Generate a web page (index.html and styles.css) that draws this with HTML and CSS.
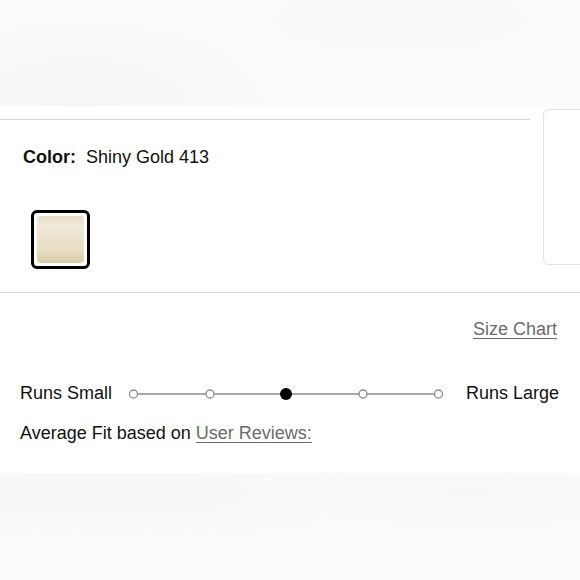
FILE: index.html
```html
<!DOCTYPE html>
<html>
<head>
<meta charset="utf-8">
<link rel="stylesheet" href="styles.css">
</head>
<body>
<div class="page">
  <div class="band band-top"></div>
  <section class="color-section">
    <div class="color-main">
      <div class="color-label"><span class="label-key">Color:</span><span class="label-val">Shiny Gold 413</span></div>
      <div class="swatch"><div class="swatch-fill"></div></div>
    </div>
    <div class="side-card"></div>
  </section>
  <section class="fit-section">
    <div class="size-chart-row"><a class="link">Size Chart</a></div>
    <div class="fit-row">
      <span class="fit-label">Runs Small</span>
      <svg class="fit-scale" width="314" height="16" viewBox="0 0 314 16">
        <line x1="4" y1="8" x2="310" y2="8" stroke="#8c8c8c" stroke-width="1.5"/>
        <circle cx="4.5" cy="8" r="4" fill="#fff" stroke="#8c8c8c" stroke-width="1.3"/>
        <circle cx="81" cy="8" r="4" fill="#fff" stroke="#8c8c8c" stroke-width="1.3"/>
        <circle cx="157" cy="8" r="6" fill="#000"/>
        <circle cx="234" cy="8" r="4" fill="#fff" stroke="#8c8c8c" stroke-width="1.3"/>
        <circle cx="309.5" cy="8" r="4" fill="#fff" stroke="#8c8c8c" stroke-width="1.3"/>
      </svg>
      <span class="fit-label">Runs Large</span>
    </div>
    <div class="avg-row">Average Fit based on <a class="link">User Reviews:</a></div>
  </section>
  <div class="band band-bottom"></div>
</div>
</body>
</html>
```
FILE: styles.css
```css
* { box-sizing: border-box; }
html, body { margin: 0; padding: 0; background: #fff; }
body {
  font-family: "Liberation Sans", Arial, sans-serif;
  color: #111;
  width: 580px;
  height: 580px;
  overflow: hidden;
}
.page { display: flex; flex-direction: column; }
.band { width: 100%; }
.band-top {
  height: 106px;
  background:
    radial-gradient(ellipse 230px 110px at 80px 110px, #f6f5f5 0%, rgba(250,250,250,0) 100%),
    radial-gradient(ellipse 240px 60px at 400px 20px, #f9f9f9 0%, rgba(251,251,251,0) 100%),
    #fcfcfc;
}
.color-section {
  height: 187px;
  display: flex;
  align-items: flex-start;
  border-bottom: 1px solid #dcdcdc;
  overflow: hidden;
}
.color-main {
  flex: 0 0 530px;
  margin-top: 13px;
  border-top: 1px solid #d6d6d6;
  padding: 27px 0 0 23px;
}
.color-label { font-size: 18px; line-height: 21px; }
.label-key { font-weight: bold; margin-right: 10px; }
.swatch {
  margin: 42px 0 0 8px;
  width: 59px;
  height: 59px;
  border: 3px solid #000;
  border-radius: 6px;
  padding: 3px;
  background: #fff;
}
.swatch-fill {
  width: 100%;
  height: 100%;
  border-radius: 4px;
  background: linear-gradient(180deg, #e5dcc2 0%, #f0eadb 22%, #ebe3cd 45%, #e7ddc2 75%, #d8cba8 100%);
}
.side-card {
  flex: 0 0 60px;
  margin: 3px 0 0 13px;
  height: 156px;
  border: 1px solid #e2e2e2;
  border-radius: 6px;
}
.fit-section {
  height: 180px;
  padding: 0 20px;
}
.size-chart-row {
  display: flex;
  justify-content: flex-end;
  padding: 26px 3px 0 0;
  font-size: 18px;
  line-height: 21px;
}
.link {
  color: #6b6b6b;
  text-decoration: underline;
  text-underline-offset: 3px;
}
.fit-row {
  display: flex;
  align-items: center;
  margin-top: 43px;
  font-size: 18px;
  line-height: 21px;
}
.fit-scale { margin-left: 17px; margin-right: 23px; display: block; }
.avg-row {
  margin-top: 19px;
  font-size: 18px;
  line-height: 21px;
}
.band-bottom {
  height: 107px;
  background:
    radial-gradient(ellipse 300px 50px at 110px 20px, #f6f6f6 0%, rgba(249,249,249,0) 100%),
    radial-gradient(ellipse 200px 40px at 470px 20px, #f8f8f8 0%, rgba(250,250,250,0) 100%),
    #fbfbfb;
}
```
